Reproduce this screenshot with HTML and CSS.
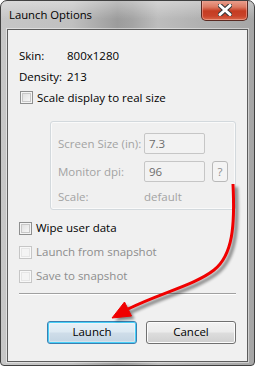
FILE: index.html
```html
<!DOCTYPE html>
<html>
<head>
<meta charset="utf-8">
<link rel="stylesheet" href="styles.css">
</head>
<body>
<div class="window">
  <div class="titlebar">
    <span class="title">Launch Options</span>
    <div class="close">
      <svg width="14" height="12" viewBox="0 0 14 12">
        <path d="M2 1.5 L12 10.5 M12 1.5 L2 10.5" stroke="#3a3a3a" stroke-width="5" stroke-linecap="round"/>
        <path d="M2 1.5 L12 10.5 M12 1.5 L2 10.5" stroke="#ffffff" stroke-width="3" stroke-linecap="round"/>
      </svg>
    </div>
  </div>
  <div class="client">
    <div class="row"><span class="key">Skin:</span><span>800x1280</span></div>
    <div class="row"><span class="key">Density:</span><span>213</span></div>
    <div class="check first"><span class="box"></span><span>Scale display to real size</span></div>
    <div class="group">
      <div class="grow"><span class="glabel">Screen Size (in):</span><span class="input">7.3</span></div>
      <div class="grow"><span class="glabel">Monitor dpi:</span><span class="input">96</span><span class="qbtn">?</span></div>
      <div class="grow scale"><span class="glabel">Scale:</span><span>default</span></div>
    </div>
    <div class="checks">
      <div class="check"><span class="box"></span><span>Wipe user data</span></div>
      <div class="check disabled"><span class="box"></span><span>Launch from snapshot</span></div>
      <div class="check disabled"><span class="box"></span><span>Save to snapshot</span></div>
    </div>
    <div class="sep"></div>
    <div class="buttons">
      <div class="btn default">Launch</div>
      <div class="btn">Cancel</div>
    </div>
  </div>
  <svg class="arrow" width="255" height="366" viewBox="0 0 255 366">
    <defs>
      <filter id="blur" x="-20%" y="-20%" width="140%" height="140%">
        <feGaussianBlur stdDeviation="1.5"/>
      </filter>
    </defs>
    <g transform="translate(3,3)" filter="url(#blur)" opacity="0.45">
      <path d="M233 184 C235 225 233 255 214 270 C195 285 160 293 128 309" fill="none" stroke="#000" stroke-width="3.5"/>
      <path d="M112 318 L131.5 316 L124.5 302 Z" fill="#000"/>
    </g>
    <path d="M233 184 C235 225 233 255 214 270 C195 285 160 293 128 309" fill="none" stroke="#f00000" stroke-width="3"/>
    <path d="M112 318 L131.5 316 L124.5 302 Z" fill="#f00000" stroke="#f00000" stroke-width="1" stroke-linejoin="round"/>
  </svg>
</div>
</body>
</html>
```
FILE: styles.css
```css
html, body {
  margin: 0;
  padding: 0;
  background: #ffffff;
}

.window {
  position: relative;
  width: 255px;
  height: 366px;
  box-sizing: border-box;
  border: 1px solid #404040;
  border-radius: 7px 7px 4px 4px;
  padding: 0 6px 3px 6px;
  background:
    linear-gradient(to bottom, rgba(255,255,255,0.35) 0px, rgba(255,255,255,0) 18px),
    linear-gradient(to right, #c6c6c6 0%, #c0c0c0 28%, #9c9c9c 46%, #a4a4a4 52%, #bdbdbd 62%, #b0b0b0 80%, #a6a6a6 100%);
  font-family: "Open Sans", "DejaVu Sans", sans-serif;
  font-size: 11.5px;
  color: #000;
  overflow: hidden;
}

.titlebar {
  height: 28px;
  display: flex;
  align-items: flex-start;
}

.title {
  font-size: 11.3px;
  line-height: 16px;
  padding: 6px 0 0 2px;
  color: #000;
}

.close {
  margin-left: auto;
  margin-top: -1px;
  width: 47px;
  height: 21px;
  box-sizing: border-box;
  border: 1px solid #5a2a22;
  border-top: none;
  border-radius: 0 0 5px 5px;
  background: linear-gradient(to bottom, #eba493 0%, #dc7a62 35%, #c53c22 55%, #c9432a 80%, #d9684a 100%);
  box-shadow: inset 0 0 0 1px rgba(255,200,190,0.45);
  display: flex;
  align-items: center;
  justify-content: center;
}

.close svg {
  display: block;
  margin-top: -1px;
}

.client {
  height: 333px;
  box-sizing: border-box;
  border: 1px solid #5c5c5c;
  box-shadow: 0 0 0 1px rgba(255,255,255,0.45);
  background: #f0f0f0;
  padding: 15px 11px 0 11px;
}

.row {
  display: flex;
  height: 21px;
  line-height: 21px;
}

.key {
  width: 48px;
}

.check {
  display: flex;
  align-items: center;
  height: 24px;
  line-height: 16px;
}

.check.first {
  height: 21px;
  padding-left: 1px;
}

.box {
  width: 13px;
  height: 13px;
  box-sizing: border-box;
  border: 1px solid #8e8f8f;
  background: linear-gradient(135deg, #dcdcdc 0%, #f2f2f2 70%, #ffffff 100%);
  box-shadow: inset 0 0 0 1px #f4f4f4, inset 0 0 0 2px #c8c8c8;
  margin-right: 4px;
  flex: none;
}

.check.disabled {
  color: #8d8d8d;
}

.check.disabled .box {
  border-color: #c6c6c6;
  background: #f4f4f4;
  box-shadow: inset 0 0 0 1px #f8f8f8, inset 0 0 0 2px #e6e6e6;
}

.group {
  margin: 13px 0 0 31px;
  border: 1px solid #d3d9dd;
  border-radius: 3px;
  box-shadow: inset 0 0 0 1px #fafafa;
  padding: 11px 0 4px 7px;
  color: #a3a3a3;
  display: flex;
  flex-direction: column;
  gap: 7px;
}

.grow {
  display: flex;
  align-items: center;
  height: 21px;
}

.grow.scale {
  height: 16px;
  line-height: 16px;
}

.glabel {
  width: 86px;
  flex: none;
}

.input {
  width: 61px;
  height: 21px;
  box-sizing: border-box;
  border: 1px solid #c6c6c6;
  border-radius: 2px;
  background: #f2f2f2;
  color: #6d6d6d;
  padding-left: 4px;
  line-height: 19px;
}

.qbtn {
  width: 16px;
  height: 21px;
  box-sizing: border-box;
  margin-left: 7px;
  border: 1px solid #b9b9b9;
  border-radius: 3px;
  background: #f4f4f4;
  color: #8d8d8d;
  text-align: center;
  line-height: 19px;
}

.checks {
  margin-top: 6px;
}

.sep {
  margin-top: 5px;
  height: 1px;
  background: #a0a0a0;
  border-bottom: 1px solid #ffffff;
}

.buttons {
  margin-top: 26px;
  display: flex;
  justify-content: flex-end;
  gap: 9px;
}

.btn {
  width: 90px;
  height: 23px;
  box-sizing: border-box;
  border: 1px solid #707070;
  border-radius: 3px;
  background: linear-gradient(to bottom, #f2f2f2 0%, #ebebeb 48%, #dddddd 52%, #cfcfcf 100%);
  box-shadow: inset 0 0 0 1px #fcfcfc;
  text-align: center;
  line-height: 20px;
}

.btn.default {
  border-color: #3c7fb1;
  box-shadow: inset 0 0 0 1px #48d0f8, inset 0 0 0 2px rgba(255,255,255,0.3);
  background: linear-gradient(to bottom, #e8f1f8 0%, #dde9f2 48%, #cfdde9 52%, #c2d4e2 100%);
}

.arrow {
  position: absolute;
  left: -1px;
  top: -1px;
  pointer-events: none;
}
```
